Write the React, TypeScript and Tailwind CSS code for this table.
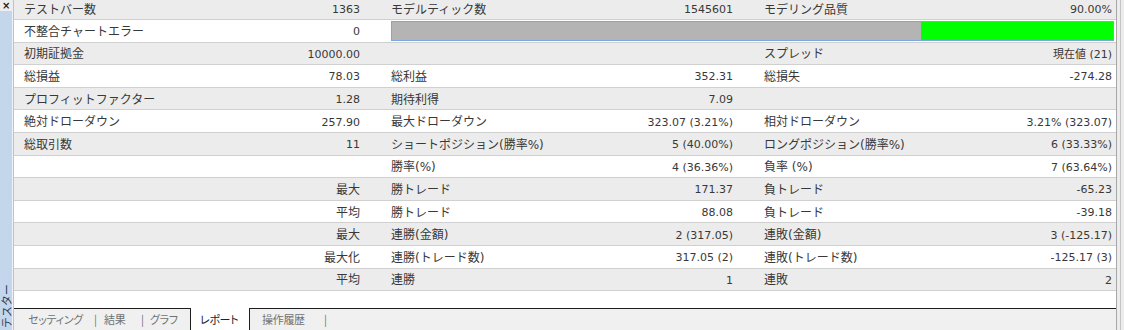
type Row = {
  l1?: string
  v1?: string
  l2?: string
  v2?: string
  l3?: string
  v3?: string
  bar?: boolean
  sub?: boolean
}

const ROWS: Row[] = [
  { l1: 'テストバー数', v1: '1363', l2: 'モデルティック数', v2: '1545601', l3: 'モデリング品質', v3: '90.00%' },
  { l1: '不整合チャートエラー', v1: '0', bar: true },
  { l1: '初期証拠金', v1: '10000.00', l3: 'スプレッド', v3: '現在値 (21)' },
  { l1: '総損益', v1: '78.03', l2: '総利益', v2: '352.31', l3: '総損失', v3: '-274.28' },
  { l1: 'プロフィットファクター', v1: '1.28', l2: '期待利得', v2: '7.09' },
  { l1: '絶対ドローダウン', v1: '257.90', l2: '最大ドローダウン', v2: '323.07 (3.21%)', l3: '相対ドローダウン', v3: '3.21% (323.07)' },
  { l1: '総取引数', v1: '11', l2: 'ショートポジション(勝率%)', v2: '5 (40.00%)', l3: 'ロングポジション(勝率%)', v3: '6 (33.33%)' },
  { l2: '勝率(%)', v2: '4 (36.36%)', l3: '負率 (%)', v3: '7 (63.64%)' },
  { v1: '最大', sub: true, l2: '勝トレード', v2: '171.37', l3: '負トレード', v3: '-65.23' },
  { v1: '平均', sub: true, l2: '勝トレード', v2: '88.08', l3: '負トレード', v3: '-39.18' },
  { v1: '最大', sub: true, l2: '連勝(金額)', v2: '2 (317.05)', l3: '連敗(金額)', v3: '3 (-125.17)' },
  { v1: '最大化', sub: true, l2: '連勝(トレード数)', v2: '317.05 (2)', l3: '連敗(トレード数)', v3: '-125.17 (3)' },
  { v1: '平均', sub: true, l2: '連勝', v2: '1', l3: '連敗', v3: '2' },
]

const LABEL = "whitespace-nowrap font-['DejaVu_Sans','Noto_Sans_CJK_JP',sans-serif] text-[12px] leading-none"
const VALUE = "whitespace-nowrap font-['DejaVu_Sans','Noto_Sans_CJK_JP',sans-serif] text-[11px] leading-none"

function StatRow({ row, index }: { row: Row; index: number }) {
  const shade = index % 2 === 0 ? 'bg-[#ececec]' : 'bg-white'
  const height = index === 0 ? 'h-[20px]' : 'h-[22.6px] pt-[2px]'

  return (
    <div className={`flex items-center border-b border-[#d0d0d0] text-[#383838] ${shade} ${height}`}>
      <div className={`w-[176px] pl-[10px] ${LABEL}`}>{row.l1}</div>
      <div className={`w-[176px] pr-[6px] text-right ${row.sub ? LABEL : VALUE}`}>{row.v1}</div>
      {row.bar ? (
        <div className="-mt-[2px] flex flex-1 pl-[25px] pr-[2px]">
          <div className="flex h-[20px] flex-1 border border-[#7aa8de]">
            <div className="flex-1 bg-[#b4b4b4]" />
            <div className="w-[192px] bg-[#00ff00]" />
          </div>
        </div>
      ) : (
        <>
          <div className={`w-[194px] pl-[25px] ${LABEL}`}>{row.l2}</div>
          <div className={`w-[179px] pr-[6px] text-right ${VALUE}`}>{row.v2}</div>
          <div className={`w-[191px] pl-[25px] ${LABEL}`}>{row.l3}</div>
          <div className={`w-[186px] pr-[4px] text-right ${VALUE}`}>{row.v3}</div>
        </>
      )}
    </div>
  )
}

export default function App() {
  return (
    <div className="flex h-[330px] w-[1124px] overflow-hidden bg-white">
      {/* Side strip */}
      <div className="flex w-[14px] flex-col border-r border-[#b8c4d2]">
        <div className="flex h-[11px] items-center bg-[#eeeeee] pl-[2px] text-[10px] font-bold leading-[10px] text-[#222] font-['DejaVu_Sans',sans-serif]">
          ×
        </div>
        <div className="flex flex-1 flex-col items-center justify-end border-r border-[#eef2f7] bg-[#c3d6ec] pb-[2px]">
          <span className="rotate-180 whitespace-nowrap font-['Noto_Sans_CJK_JP',sans-serif] text-[11px] leading-[12px] text-[#2c3c58] [text-orientation:sideways] [writing-mode:vertical-rl]">
            テスター
          </span>
        </div>
      </div>

      {/* Report */}
      <div className="flex w-[1102px] flex-col">
        <div>
          {ROWS.map((row, i) => (
            <StatRow key={i} row={row} index={i} />
          ))}
        </div>
        <div className="flex-1 bg-white" />

        {/* Tabs */}
        <div className="flex h-[22px] border-t border-[#1e1e1e] bg-[#f0f0f0] font-['Noto_Sans_CJK_JP',sans-serif] text-[11px] leading-none tracking-[-0.3px] text-[#727272] [font-feature-settings:'palt']">
          <span className="flex w-[80px] items-center pl-[14px]">セッティング</span>
          <span className="flex w-[10px] items-center">|</span>
          <span className="flex w-[37px] items-center">結果</span>
          <span className="flex w-[9px] items-center">|</span>
          <span className="flex w-[40px] items-center">グラフ</span>
          <span className="-mt-px flex h-[23px] w-[60px] items-center border-x border-[#1e1e1e] bg-white pl-[9px] text-[#222]">
            レポート
          </span>
          <span className="flex w-[74px] items-center pl-[12px]">操作履歴</span>
          <span className="flex items-center">|</span>
        </div>
      </div>

      {/* Right frame */}
      <div className="flex w-[8px] border-l border-[#a8a8a8] bg-[#ececec]">
        <div className="ml-[3px] w-px bg-[#c4c4c4]" />
      </div>
    </div>
  )
}
